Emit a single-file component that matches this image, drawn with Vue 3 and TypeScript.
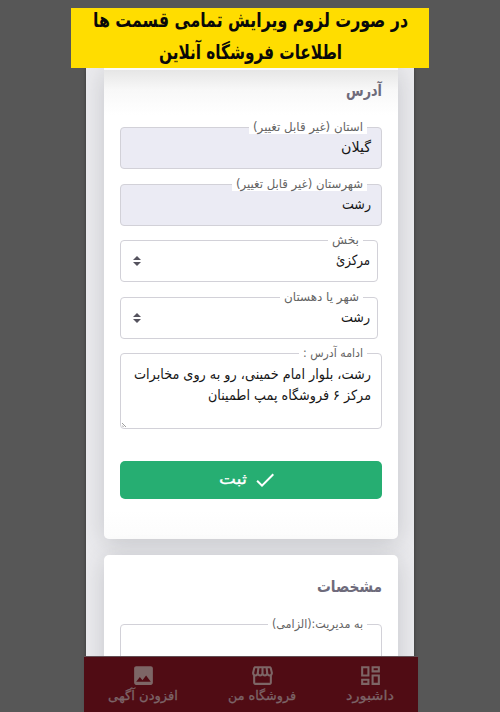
<script setup lang="ts">
import { h, type FunctionalComponent } from 'vue'

interface LineProps {
  text: string
  w: number
  size: number
}

// One right-to-left line of text, condensed to a fixed measure.
const TextLine: FunctionalComponent<LineProps> = (p) =>
  h('svg', { class: 'line', width: p.w, height: 20 }, [
    h(
      'text',
      {
        x: p.w,
        y: 14,
        direction: 'rtl',
        'font-size': p.size,
        textLength: p.w,
        lengthAdjust: 'spacingAndGlyphs',
        fill: 'currentColor',
      },
      p.text,
    ),
  ])
TextLine.props = ['text', 'w', 'size']

interface Field {
  label: string
  labelW: number
  value: string
  valueW: number
  kind: 'readonly' | 'select'
}

const fields: Field[] = [
  { label: 'استان (غیر قابل تغییر)', labelW: 110, value: 'گیلان', valueW: 30, kind: 'readonly' },
  { label: 'شهرستان (غیر قابل تغییر)', labelW: 127, value: 'رشت', valueW: 29, kind: 'readonly' },
  { label: 'بخش', labelW: 27, value: 'مرکزئ', valueW: 34, kind: 'select' },
  { label: 'شهر یا دهستان', labelW: 75, value: 'رشت', valueW: 29, kind: 'select' },
]

const tabs = [
  {
    label: 'داشبورد',
    w: 48,
    icon: 'M19 5v2h-4V5h4M9 5v6H5V5h4m10 8v6h-4v-6h4M9 17v2H5v-2h4M21 3h-8v6h8V3zM11 3H3v10h8V3zm10 8h-8v10h8V11zm-10 4H3v6h8v-6z',
  },
  {
    label: 'فروشگاه من',
    w: 68,
    icon: 'M21.9 8.89l-1.05-4.37c-.22-.9-1-1.52-1.91-1.52H5.05c-.9 0-1.69.63-1.9 1.52L2.1 8.89c-.24 1.02-.02 2.06.62 2.88.08.11.19.19.28.29V19c0 1.1.9 2 2 2h14c1.1 0 2-.9 2-2v-6.94c.09-.09.2-.18.28-.28.64-.82.87-1.87.62-2.89zm-2.99-3.9l1.05 4.37c.1.42.01.84-.25 1.17-.14.18-.44.47-.94.47-.61 0-1.14-.49-1.21-1.14L16.98 5l1.93-.01zM13 5h1.96l.54 4.52c.05.39-.07.78-.33 1.07-.22.26-.54.41-.95.41-.67 0-1.22-.59-1.22-1.31V5zM8.49 9.52L9.04 5H11v4.69c0 .72-.55 1.31-1.29 1.31-.34 0-.65-.15-.89-.41-.25-.29-.37-.68-.33-1.07zm-4.45-.16L5.05 5h1.97l-.58 4.86c-.08.65-.6 1.14-1.21 1.14-.49 0-.8-.29-.93-.47-.27-.32-.36-.75-.26-1.17zM5 19v-6.03c.08.01.15.03.23.03.87 0 1.66-.36 2.24-.95.6.6 1.4.95 2.31.95.87 0 1.65-.36 2.23-.93.59.57 1.39.93 2.29.93.84 0 1.64-.35 2.24-.95.58.59 1.37.95 2.24.95.08 0 .15-.02.23-.03V19H5z',
  },
  {
    label: 'افزودن آگهی',
    w: 70,
    icon: 'M21 19V5c0-1.1-.9-2-2-2H5c-1.1 0-2 .9-2 2v14c0 1.1.9 2 2 2h14c1.1 0 2-.9 2-2zM8.5 13.5l2.5 3.01L14.5 12l4.5 6H5l3.5-4.5z',
  },
]
</script>

<template>
  <div class="screen" dir="rtl">
    <main class="page">
      <section class="card address">
        <h2 class="title"><TextLine text="آدرس" :w="36" :size="16" /></h2>
        <div v-for="f in fields" :key="f.label" class="field" :class="f.kind">
          <span class="label"><TextLine :text="f.label" :w="f.labelW" :size="12" /></span>
          <TextLine :text="f.value" :w="f.valueW" :size="14" />
          <svg v-if="f.kind === 'select'" class="arrows" width="8" height="10" viewBox="0 0 8 10">
            <path d="M0 4L4 0l4 4zM0 6h8l-4 4z" />
          </svg>
        </div>
        <div class="field area">
          <span class="label"><TextLine text="ادامه آدرس :" :w="60" :size="12" /></span>
          <TextLine text="رشت، بلوار امام خمینی، رو به روی مخابرات" :w="237" :size="14" />
          <TextLine text="مرکز ۶ فروشگاه پمپ اطمینان" :w="163" :size="14" />
          <svg class="grip" width="4" height="4" viewBox="0 0 5 5"><path d="M0 0l5 5M0 3l2 2" /></svg>
        </div>
        <button class="submit" type="button">
          <svg width="24" height="24" viewBox="0 0 24 24">
            <path d="M9 16.17L4.83 12l-1.42 1.41L9 19 21 7l-1.41-1.41z" />
          </svg>
          <TextLine text="ثبت" :w="28" :size="15" />
        </button>
      </section>
      <section class="card specs">
        <h2 class="title"><TextLine text="مشخصات" :w="65" :size="16" /></h2>
        <div class="field area">
          <span class="label"><TextLine text="به مدیریت:(الزامی)" :w="91" :size="12" /></span>
        </div>
      </section>
    </main>
    <header class="banner">
      <TextLine text="در صورت لزوم ویرایش تمامی قسمت ها" :w="315" :size="20" />
      <TextLine text="اطلاعات فروشگاه آنلاین" :w="183" :size="20" />
    </header>
    <nav class="tabs">
      <a v-for="t in tabs" :key="t.label" class="tab">
        <svg class="icon" width="25" height="25" viewBox="0 0 24 24"><path :d="t.icon" /></svg>
        <TextLine :text="t.label" :w="t.w" :size="13" />
      </a>
    </nav>
  </div>
</template>

<style>
body {
  margin: 0;
  overflow: hidden;
}
</style>

<style scoped>
.screen {
  position: relative;
  box-sizing: border-box;
  width: 500px;
  height: 712px;
  padding-top: 68px;
  overflow: hidden;
  background: #575757;
  font-family: 'DejaVu Sans', sans-serif;
}
.line {
  display: block;
  flex: none;
  overflow: visible;
}
.page {
  box-sizing: border-box;
  width: 328px;
  height: 644px;
  margin: 0 auto;
  padding: 0 16px 0 18px;
  overflow: hidden;
  background: #ebebee;
  box-shadow: 0 0 4px #383838;
}
.card {
  box-sizing: border-box;
  padding: 0 16px;
  background: #fff;
  box-shadow: 0 4px 24px rgba(50, 55, 65, 0.2);
}
.address {
  height: 471px;
  border-top: 2px solid #fbfbfb;
  border-radius: 0 0 5px 5px;
  background: linear-gradient(#e6e6e6, #f8f8f8 20px, #fff 45px, #fff 440px, #fcfcfc);
}
.specs {
  height: 180px;
  margin-top: 16px;
  border-radius: 5px;
}
.title {
  margin: 0;
  padding: 12px 0 25px;
  color: #6e6b7b;
  font-weight: bold;
}
.specs .title {
  padding: 23px 0 26px;
}
.field {
  position: relative;
  box-sizing: border-box;
  display: flex;
  align-items: center;
  justify-content: space-between;
  height: 42px;
  margin-bottom: 15px;
  padding: 0 10px;
  border: 1px solid #d2d1d8;
  border-radius: 4px;
  background: #fff;
  color: #161616;
}
.readonly {
  background: #ebebf4;
}
.readonly + .select {
  margin-top: -1px;
}
.select {
  margin-right: 4px;
  padding: 0 7px 0 12px;
}
.area {
  flex-direction: column;
  align-items: flex-start;
  justify-content: flex-start;
  gap: 1px;
  height: 76px;
  margin: -1px 0 32px;
  padding-top: 11px;
}
.specs .area {
  margin-top: 0;
}
.label {
  position: absolute;
  top: -11px;
  right: 14px;
  height: 17px;
  padding: 0 4px;
  background: #fff;
  color: #646464;
}
.arrows {
  fill: #55535e;
}
.grip {
  position: absolute;
  left: 1px;
  bottom: 1px;
  fill: none;
  stroke: #666;
  stroke-width: 0.8;
}
.submit {
  box-sizing: border-box;
  display: flex;
  align-items: center;
  gap: 6px;
  width: 262px;
  height: 38px;
  padding: 0 105px 0 0;
  border: 0;
  border-radius: 5px;
  background: #26ae72;
  color: #fff;
  font-family: inherit;
  fill: #fff;
}
.submit .line {
  stroke: #fff;
  stroke-width: 0.3;
}
.banner {
  position: absolute;
  top: 8px;
  left: 71px;
  box-sizing: border-box;
  display: flex;
  flex-direction: column;
  align-items: center;
  gap: 12px;
  width: 358px;
  height: 60px;
  padding-top: 5px;
  background: #ffdd00;
  color: #090909;
  font-weight: bold;
}
.tabs {
  position: absolute;
  bottom: 0;
  left: 84px;
  box-sizing: border-box;
  width: 334px;
  height: 56px;
  padding: 7px 24px 0;
  display: flex;
  justify-content: space-between;
  border-top: 1px solid #625055;
  background: #500c14;
}
.tab {
  display: flex;
  flex-direction: column;
  align-items: center;
  color: #7c6468;
}
.tab .line {
  stroke: #7c6468;
  stroke-width: 0.3;
}
.icon {
  margin-top: -1px;
  margin-bottom: -2px;
  fill: #7d6666;
}
</style>
